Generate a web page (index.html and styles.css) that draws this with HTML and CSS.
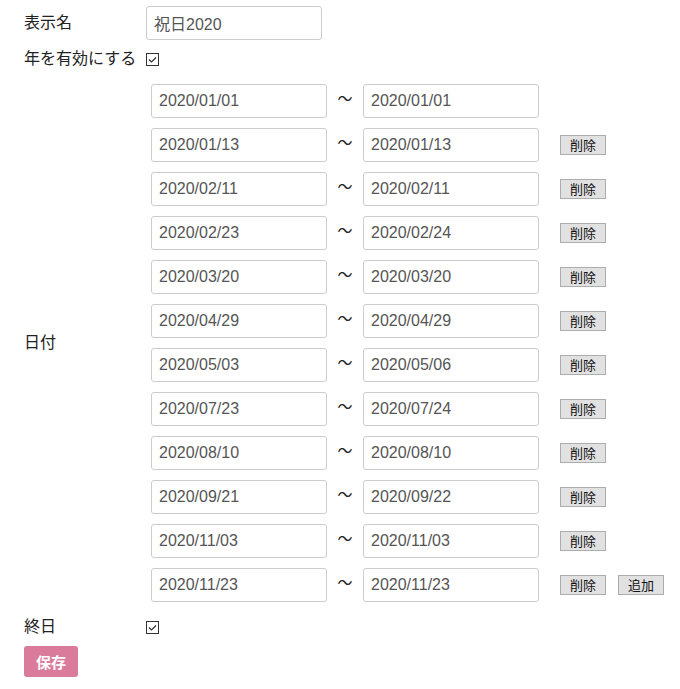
FILE: index.html
```html
<!DOCTYPE html>
<html lang="ja">
<head>
    <meta charset="UTF-8">
    <meta name="viewport" content="width=device-width, initial-scale=1.0">
    <title>祝日設定</title>
    <link rel="stylesheet" href="styles.css">
</head>
<body>
    <form class="holiday-form">
        <div class="field field-name">
            <label class="field-label" for="displayName">表示名</label>
            <input type="text" id="displayName" class="text-input name-input" value="祝日2020">
        </div>

        <div class="field field-check">
            <span class="field-label">年を有効にする</span>
            <span class="check-box"><svg width="13" height="13" viewBox="0 0 13 13"><rect x="0.5" y="0.5" width="12" height="12" fill="#fff" stroke="#333"/><path d="M3 6.5 L5.5 9 L10 4.5" fill="none" stroke="#333" stroke-width="1.2"/></svg></span>
        </div>

        <div class="field field-dates">
            <span class="field-label">日付</span>
            <div class="date-list">
                <div class="date-row">
                    <input type="text" class="text-input date-input" value="2020/01/01">
                    <span class="tilde">～</span>
                    <input type="text" class="text-input date-input" value="2020/01/01">
                </div>
                <div class="date-row">
                    <input type="text" class="text-input date-input" value="2020/01/13">
                    <span class="tilde">～</span>
                    <input type="text" class="text-input date-input" value="2020/01/13">
                    <button type="button" class="small-btn">削除</button>
                </div>
                <div class="date-row">
                    <input type="text" class="text-input date-input" value="2020/02/11">
                    <span class="tilde">～</span>
                    <input type="text" class="text-input date-input" value="2020/02/11">
                    <button type="button" class="small-btn">削除</button>
                </div>
                <div class="date-row">
                    <input type="text" class="text-input date-input" value="2020/02/23">
                    <span class="tilde">～</span>
                    <input type="text" class="text-input date-input" value="2020/02/24">
                    <button type="button" class="small-btn">削除</button>
                </div>
                <div class="date-row">
                    <input type="text" class="text-input date-input" value="2020/03/20">
                    <span class="tilde">～</span>
                    <input type="text" class="text-input date-input" value="2020/03/20">
                    <button type="button" class="small-btn">削除</button>
                </div>
                <div class="date-row">
                    <input type="text" class="text-input date-input" value="2020/04/29">
                    <span class="tilde">～</span>
                    <input type="text" class="text-input date-input" value="2020/04/29">
                    <button type="button" class="small-btn">削除</button>
                </div>
                <div class="date-row">
                    <input type="text" class="text-input date-input" value="2020/05/03">
                    <span class="tilde">～</span>
                    <input type="text" class="text-input date-input" value="2020/05/06">
                    <button type="button" class="small-btn">削除</button>
                </div>
                <div class="date-row">
                    <input type="text" class="text-input date-input" value="2020/07/23">
                    <span class="tilde">～</span>
                    <input type="text" class="text-input date-input" value="2020/07/24">
                    <button type="button" class="small-btn">削除</button>
                </div>
                <div class="date-row">
                    <input type="text" class="text-input date-input" value="2020/08/10">
                    <span class="tilde">～</span>
                    <input type="text" class="text-input date-input" value="2020/08/10">
                    <button type="button" class="small-btn">削除</button>
                </div>
                <div class="date-row">
                    <input type="text" class="text-input date-input" value="2020/09/21">
                    <span class="tilde">～</span>
                    <input type="text" class="text-input date-input" value="2020/09/22">
                    <button type="button" class="small-btn">削除</button>
                </div>
                <div class="date-row">
                    <input type="text" class="text-input date-input" value="2020/11/03">
                    <span class="tilde">～</span>
                    <input type="text" class="text-input date-input" value="2020/11/03">
                    <button type="button" class="small-btn">削除</button>
                </div>
                <div class="date-row">
                    <input type="text" class="text-input date-input" value="2020/11/23">
                    <span class="tilde">～</span>
                    <input type="text" class="text-input date-input" value="2020/11/23">
                    <button type="button" class="small-btn">削除</button>
                    <button type="button" class="small-btn">追加</button>
                </div>
            </div>
        </div>

        <div class="field field-allday">
            <span class="field-label">終日</span>
            <span class="check-box"><svg width="13" height="13" viewBox="0 0 13 13"><rect x="0.5" y="0.5" width="12" height="12" fill="#fff" stroke="#333"/><path d="M3 6.5 L5.5 9 L10 4.5" fill="none" stroke="#333" stroke-width="1.2"/></svg></span>
        </div>

        <button type="button" class="save-btn">保存</button>
    </form>
</body>
</html>
```

FILE: styles.css
```css
body {
    margin: 0;
    font-family: "Liberation Sans", Arial, "Noto Sans CJK JP", sans-serif;
    font-size: 16px;
    color: #222;
    background-color: #fff;
}
.holiday-form {
    padding: 6px 0 0 24px;
}
.field {
    display: grid;
    grid-template-columns: 122px auto;
    align-items: center;
}
.field-label {
    line-height: 20px;
}
.text-input {
    box-sizing: border-box;
    height: 34px;
    padding: 0 7px;
    border: 1px solid #ccc;
    border-radius: 3px;
    font-family: "Liberation Sans", Arial, "Noto Sans CJK JP", sans-serif;
    font-size: 16px;
    color: #555;
    background: #fff;
}
.name-input {
    width: 176px;
}
.field-check {
    margin-top: 9px;
    height: 20px;
}
.check-box {
    display: flex;
    height: 13px;
}
.field-dates {
    margin-top: 15px;
}
.date-list {
    display: flex;
    flex-direction: column;
    gap: 10px;
    padding-left: 5px;
}
.date-row {
    display: flex;
    align-items: center;
}
.date-input {
    width: 176px;
}
.tilde {
    width: 36px;
    padding-bottom: 6px;
    text-align: center;
    font-family: "Noto Sans CJK JP", sans-serif;
    font-size: 15px;
    line-height: 20px;
}
.small-btn {
    box-sizing: border-box;
    height: 20px;
    width: 46px;
    padding: 0;
    margin-left: 12px;
    border: 1px solid #adadad;
    background-color: #e1e1e1;
    font-family: "Noto Sans CJK JP", sans-serif;
    font-size: 13px;
    line-height: 18px;
    color: #111;
}
.date-input + .tilde + .date-input + .small-btn {
    margin-left: 21px;
}
.field-allday {
    margin-top: 15px;
    height: 20px;
}
.save-btn {
    margin-top: 9px;
    width: 54px;
    height: 31px;
    padding: 0;
    border: none;
    border-radius: 3px;
    background-color: #db7b9c;
    color: #fff;
    font-family: "Noto Sans CJK JP", sans-serif;
    font-weight: bold;
    font-size: 15px;
    cursor: pointer;
}
```
